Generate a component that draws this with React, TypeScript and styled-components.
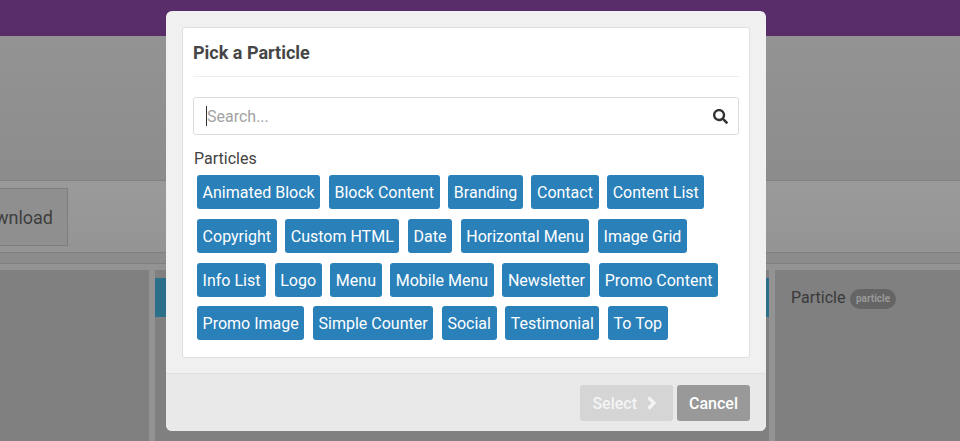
import styled, { createGlobalStyle } from 'styled-components';
import { FaSearch } from 'react-icons/fa';

const Global = createGlobalStyle`
  html, body { margin: 0; padding: 0; height: 100%; overflow: hidden; }
  body { font-family: Roboto, 'Liberation Sans', sans-serif; background: #808080; }
  * { box-sizing: border-box; }
`;

const Page = styled.div`
  position: relative;
  width: 960px;
  height: 441px;
  overflow: hidden;
  display: flex;
  flex-direction: column;
`;

const TopBar = styled.div`
  height: 36px;
  background: #582d6a;
  flex: none;
`;

const Hero = styled.div`
  height: 145px;
  flex: none;
  background: linear-gradient(#939393, #8c8c8c);
  border-bottom: 1px solid #818181;
`;

const Toolbar = styled.div`
  height: 72px;
  flex: none;
  background: linear-gradient(#9a9a9a, #949494);
  border-bottom: 1px solid #7f7f7f;
  padding-top: 7px;
`;

const DownloadBtn = styled.div`
  width: 100px;
  height: 58px;
  margin-left: -32px;
  display: flex;
  align-items: center;
  justify-content: flex-end;
  padding-right: 14px;
  font-size: 18px;
  color: #3e3e3e;
  background: #8f8f8f;
  border: 1px solid #7e7e7e;
`;

const Band = styled.div`
  height: 11px;
  flex: none;
  background: #8c8c8c;
  border-bottom: 1px solid #7f7f7f;
`;

const Columns = styled.div`
  flex: 1;
  display: grid;
  grid-template-columns: 149px 614px 185px;
  gap: 6px;
  padding-top: 6px;
  background: #939393;
`;

const Column = styled.div`
  background: #808080;
  padding: 8px 0;
`;

const SideColumn = styled(Column)`
  padding: 18px 16px;
  display: flex;
  align-items: flex-start;
  gap: 5px;
  font-size: 16px;
  color: #3a3a3a;
`;

const BlueStrip = styled.div`
  height: 39px;
  background: #2c6f8a;
`;

const Pill = styled.span`
  height: 20px;
  margin-top: 1px;
  padding: 0 5.5px;
  border-radius: 10px;
  background: #656565;
  color: #999;
  font-size: 10px;
  font-weight: 700;
  line-height: 20px;
`;

const Modal = styled.div`
  position: absolute;
  left: 166px;
  top: 11px;
  width: 600px;
  height: 420px;
  border-radius: 6px;
  background: #f0f0f0;
  overflow: hidden;
  display: flex;
  flex-direction: column;
`;

const Body = styled.div`
  flex: 1;
  padding: 16px 16px 15px;
`;

const Card = styled.div`
  height: 331px;
  padding: 0 10px;
  background: #fff;
  border: 1px solid #dfdfdf;
  border-radius: 3px;
`;

const Title = styled.h3`
  margin: 0;
  height: 49px;
  padding-top: 15px;
  font-size: 18px;
  line-height: 20px;
  font-weight: 700;
  color: #464646;
  border-bottom: 1px solid #eee;
`;

const SearchBox = styled.div`
  margin-top: 20px;
  height: 38px;
  display: flex;
  align-items: center;
  padding: 0 10px 0 12px;
  border: 1px solid #dcdcdc;
  border-radius: 3px;
  color: #333;
`;

const Caret = styled.span`
  width: 1px;
  height: 20px;
  background: #333;
`;

const SearchText = styled.span`
  flex: 1;
  font-size: 16px;
  color: #a3a3a3;
`;

const GroupLabel = styled.div`
  margin: 14px 0 0 1px;
  font-size: 16px;
  line-height: 19px;
  color: #424242;
`;

const Tags = styled.div`
  display: flex;
  flex-wrap: wrap;
  gap: 9.75px 8.6px;
  margin: 7px 0 0 4px;
`;

const Tag = styled.div`
  height: 34px;
  padding: 0 5.6px;
  border-radius: 3px;
  background: #2a80b9;
  color: #fff;
  font-size: 16px;
  line-height: 35px;
`;

const Footer = styled.div`
  height: 58px;
  flex: none;
  display: flex;
  justify-content: flex-end;
  gap: 4px;
  padding: 11px 16px 0 0;
  background: #e9e9e9;
  border-top: 1px solid #e0e0e0;
`;

const FooterBtn = styled.div<{ $disabled?: boolean }>`
  height: 36px;
  display: flex;
  align-items: center;
  gap: 9px;
  padding: ${p => (p.$disabled ? '0 16px 0 12px' : '0 12px')};
  border-radius: 3px;
  background: ${p => (p.$disabled ? '#d5d5d5' : '#999')};
  color: ${p => (p.$disabled ? '#f4f4f4' : '#fff')};
  font-size: 16px;
  font-weight: 500;
`;

const particles = [
  'Animated Block', 'Block Content', 'Branding', 'Contact', 'Content List',
  'Copyright', 'Custom HTML', 'Date', 'Horizontal Menu', 'Image Grid',
  'Info List', 'Logo', 'Menu', 'Mobile Menu', 'Newsletter', 'Promo Content',
  'Promo Image', 'Simple Counter', 'Social', 'Testimonial', 'To Top',
];

const Chevron = () => (
  <svg width="11" height="14" viewBox="0 0 11 14" fill="none">
    <path d="M2.5 1.5 L8 7 L2.5 12.5" stroke="currentColor" strokeWidth="3.2" />
  </svg>
);

const App = () => (
  <Page>
    <Global />
    <TopBar />
    <Hero />
    <Toolbar>
      <DownloadBtn>Download</DownloadBtn>
    </Toolbar>
    <Band />
    <Columns>
      <Column />
      <Column><BlueStrip /></Column>
      <SideColumn>Particle <Pill>particle</Pill></SideColumn>
    </Columns>
    <Modal>
      <Body>
        <Card>
          <Title>Pick a Particle</Title>
          <SearchBox>
            <Caret />
            <SearchText>Search...</SearchText>
            <FaSearch size={15} />
          </SearchBox>
          <GroupLabel>Particles</GroupLabel>
          <Tags>
            {particles.map(name => <Tag key={name}>{name}</Tag>)}
          </Tags>
        </Card>
      </Body>
      <Footer>
        <FooterBtn $disabled>Select <Chevron /></FooterBtn>
        <FooterBtn>Cancel</FooterBtn>
      </Footer>
    </Modal>
  </Page>
);

export default App;
